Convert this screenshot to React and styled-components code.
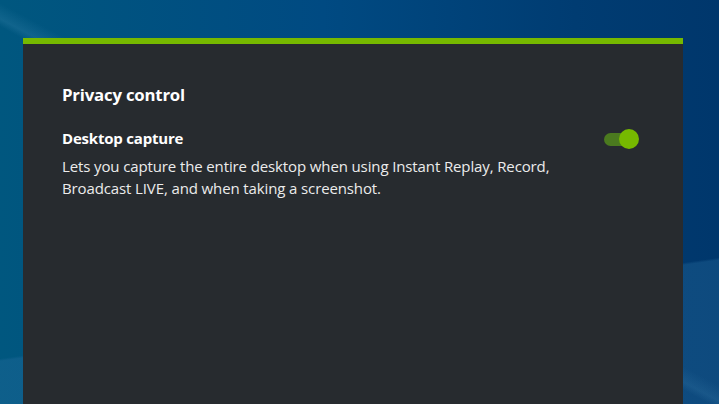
import React, { useState } from "react";
import styled, { createGlobalStyle } from "styled-components";

const GlobalStyle = createGlobalStyle`
  html, body {
    margin: 0;
    padding: 0;
    height: 100%;
  }
  body {
    font-family: "Open Sans", "Noto Sans", sans-serif;
    overflow: hidden;
  }
`;

const Desktop = styled.div`
  width: 719px;
  height: 404px;
  padding: 38px 0 0 23px;
  box-sizing: border-box;
  background:
    linear-gradient(172deg, transparent 0 71%, rgba(40, 110, 160, 0.35) 71.5% 100%),
    linear-gradient(28deg, transparent 0 48%, rgba(90, 160, 200, 0.18) 49%, transparent 51%),
    linear-gradient(90deg, #00577f 0%, #004a82 45%, #003c72 80%, #00376c 100%);
`;

const Panel = styled.div`
  width: 660px;
  height: 366px;
  box-sizing: border-box;
  background: #272b2f;
  border-top: 6px solid #76b900;
  padding: 40px 44px 0 39px;
  color: #fff;
`;

const Title = styled.h2`
  margin: 0 0 21px;
  font-size: 16.8px;
  font-weight: 700;
  line-height: 22px;
  letter-spacing: -0.2px;
`;

const SettingRow = styled.div`
  display: flex;
  align-items: flex-start;
  justify-content: space-between;
`;

const SettingText = styled.div`
  max-width: 520px;
`;

const SettingName = styled.div`
  margin-bottom: 6px;
  font-size: 15px;
  font-weight: 700;
  line-height: 22px;
  letter-spacing: -0.2px;
`;

const SettingDesc = styled.div`
  font-size: 15px;
  line-height: 22px;
  color: #ececec;
  letter-spacing: -0.12px;
`;

const Toggle = styled.button`
  position: relative;
  width: 35px;
  height: 20px;
  margin-top: 2px;
  padding: 0;
  border: none;
  background: transparent;
  cursor: pointer;

  &::before {
    content: "";
    position: absolute;
    left: 0;
    top: 4px;
    width: 28px;
    height: 13px;
    border-radius: 7px;
    background: ${(p) => (p.$on ? "#4b7a1f" : "#555")};
  }

  &::after {
    content: "";
    position: absolute;
    top: 0;
    left: ${(p) => (p.$on ? "15px" : "0")};
    width: 20px;
    height: 20px;
    border-radius: 50%;
    background: ${(p) => (p.$on ? "#76b900" : "#999")};
  }
`;

const App = () => {
  const [on, setOn] = useState(true);
  return (
    <>
      <GlobalStyle />
      <Desktop>
        <Panel>
          <Title>Privacy control</Title>
          <SettingRow>
            <SettingText>
              <SettingName>Desktop capture</SettingName>
              <SettingDesc>
                Lets you capture the entire desktop when using Instant Replay, Record,
                Broadcast LIVE, and when taking a screenshot.
              </SettingDesc>
            </SettingText>
            <Toggle $on={on} onClick={() => setOn(!on)} aria-label="Desktop capture" />
          </SettingRow>
        </Panel>
      </Desktop>
    </>
  );
};

export default App;
